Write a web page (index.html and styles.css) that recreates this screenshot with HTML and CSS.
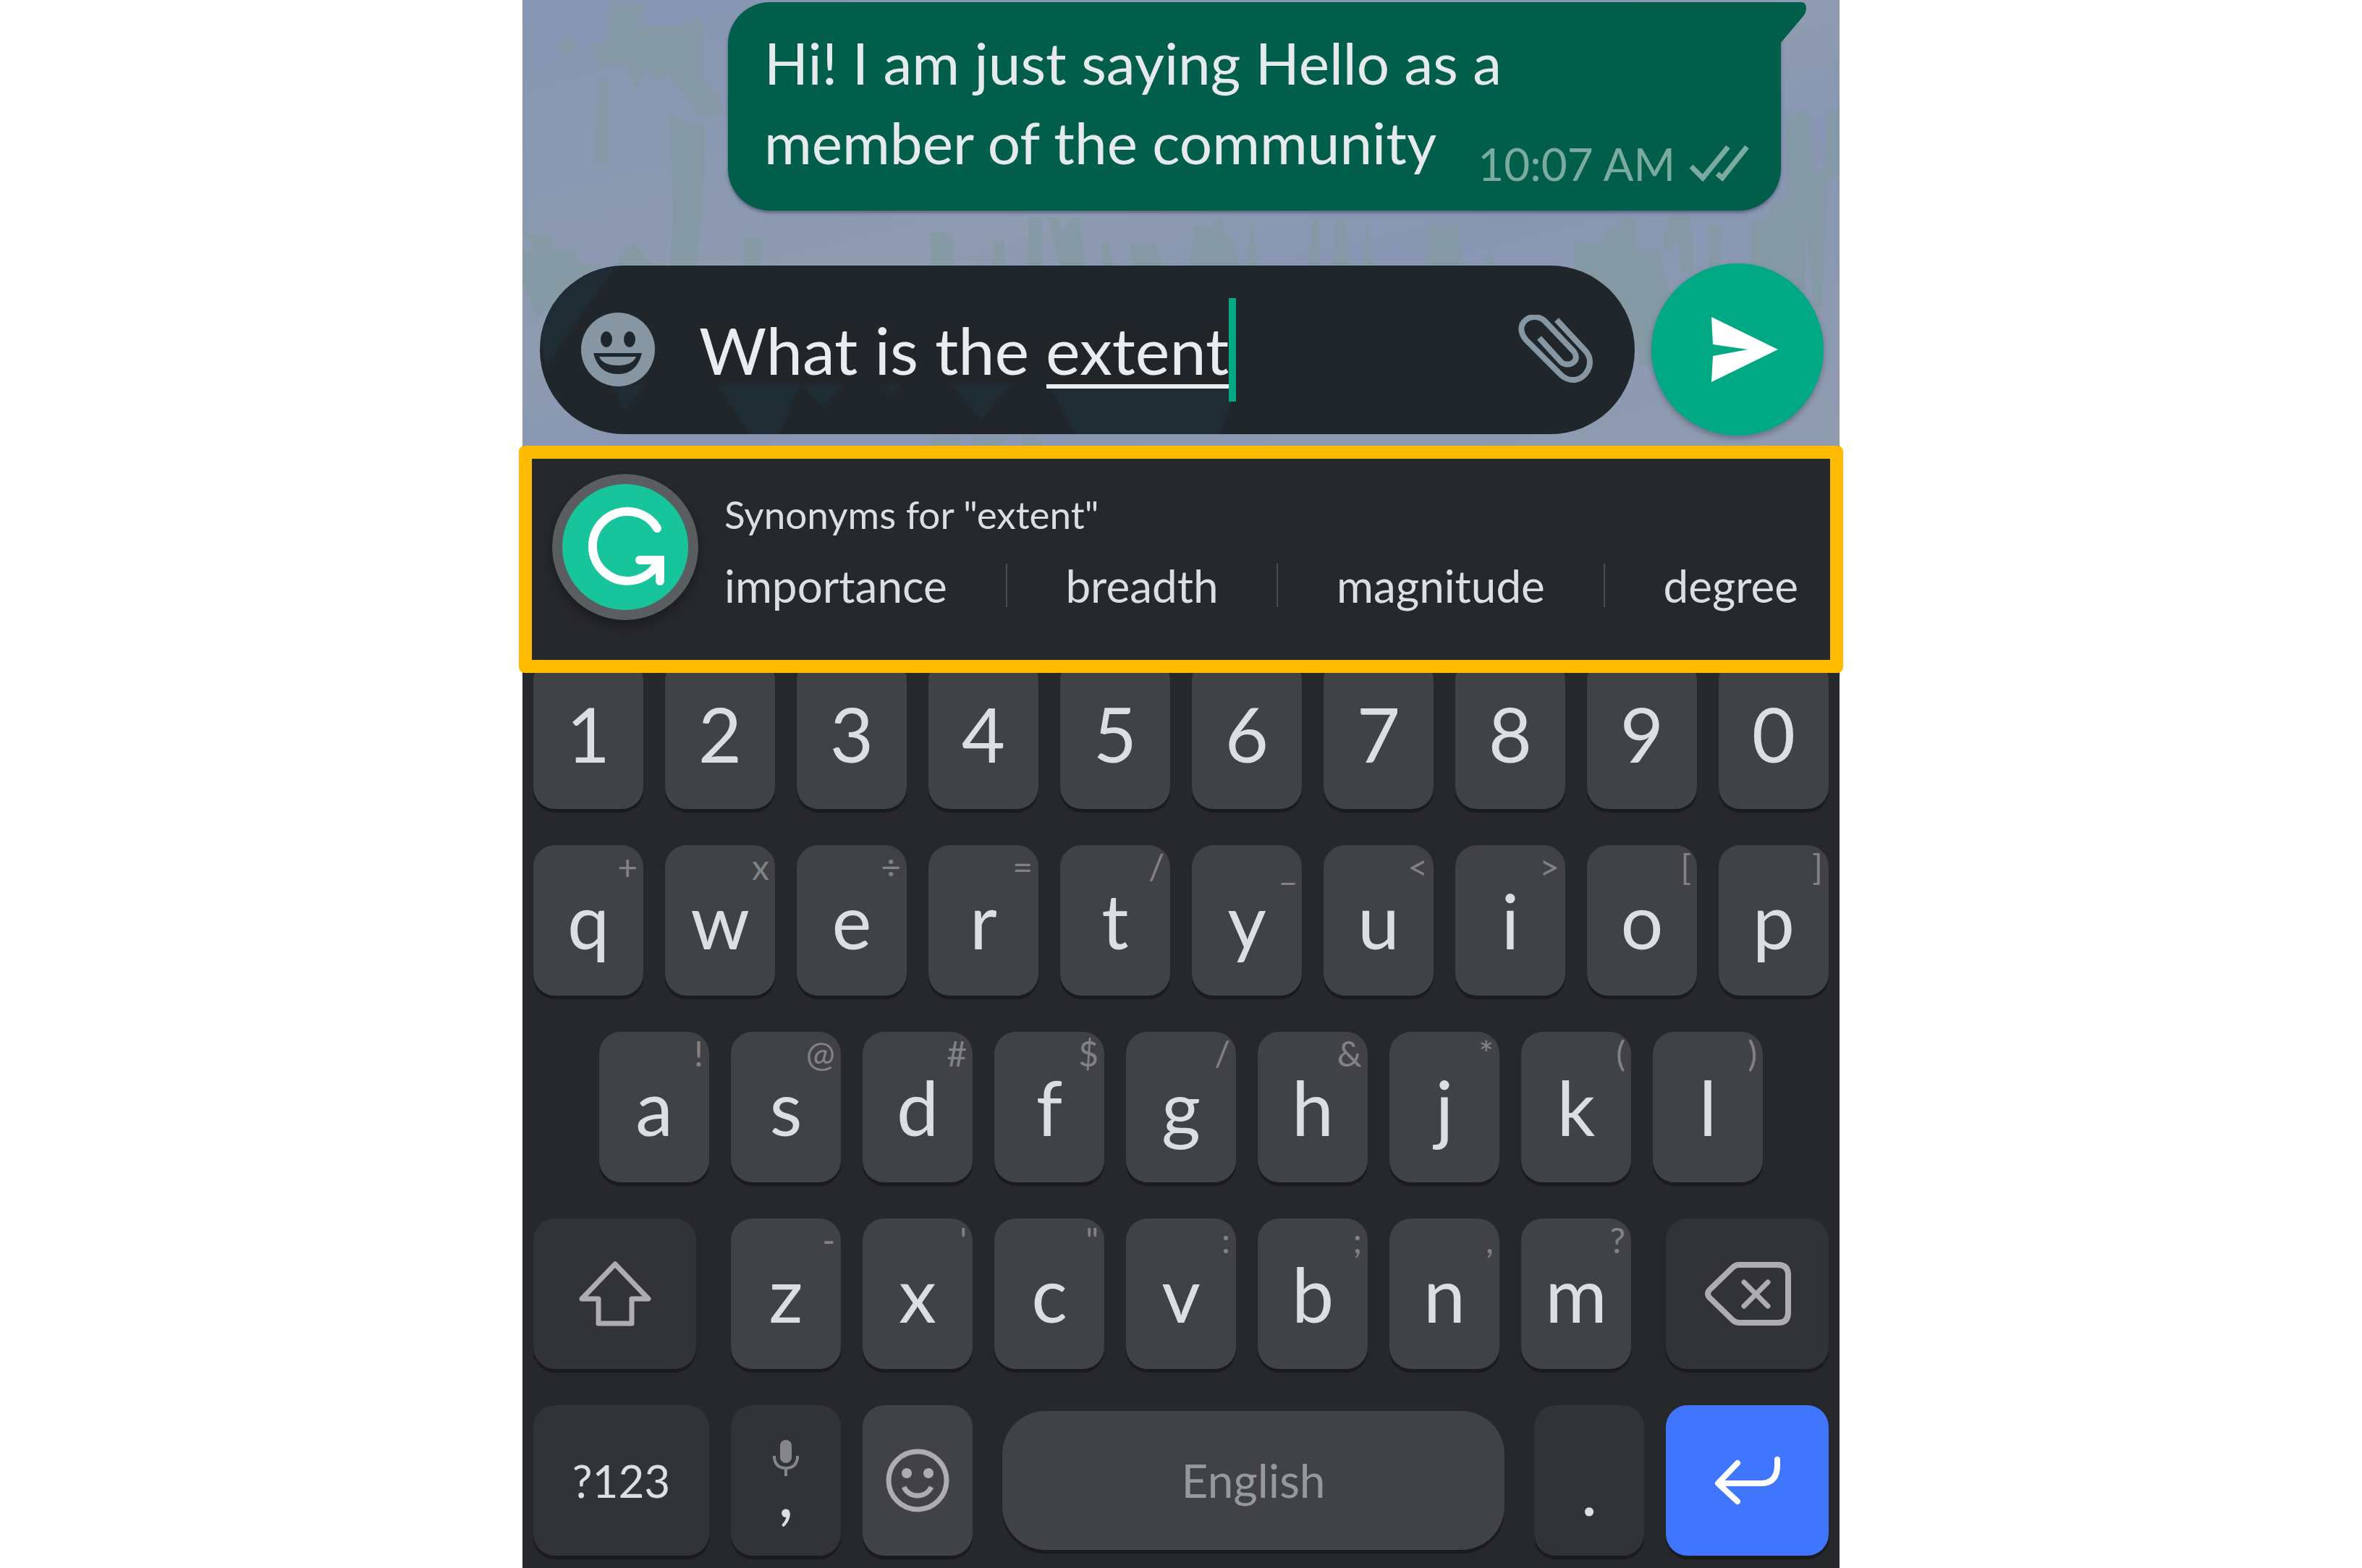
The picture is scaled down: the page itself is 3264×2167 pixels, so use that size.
FILE: index.html
```
<!DOCTYPE html>
<html lang="en">
<head>
    <meta charset="UTF-8">
    <title>Chat keyboard</title>
    <link rel="stylesheet" href="styles.css">
</head>
<body>
    <main class="phone">
        <section class="chat">
            <!-- Wallpaper -->
            <svg class="wallpaper" viewBox="0 0 1820 616" preserveAspectRatio="none" aria-hidden="true">
                <g fill="#849aa3" opacity="0.85">
                    <path d="M121 6H166V36H222L240 25L249 32L251 110L275 140L278 155L262 163L245 160L215 120L200 100L185 112L170 95L157 125L145 95L130 85L108 95L95 60L118 60Z"/>
                    <path d="M103 110H119V225H99Z"/>
                    <path d="M50 52H72V73H50Z"/>
                    <path d="M203 155L225 170H252L250 290L240 370H203L208 300Z"/>
                    <path d="M3 325H38L44 345H70L78 365H108V380L70 400L20 440L0 390V345L20 350Z"/>
                    <path d="M130 370L140 342L155 337L185 370Z"/>
                    <path d="M304 327H333L328 370H308Z"/>
                    <path d="M565 370V322L585 320L596 330V370Z"/>
                    <path d="M648 370L652 333H665L668 370Z"/>
                    <path d="M697 370L700 300H718V370Z"/>
                    <path d="M727 300H740L745 320L760 300H770L778 370H742Z"/>
                    <path d="M800 335H812L816 370H804Z"/>
                    <path d="M840 336H875L886 370H842Z"/>
                    <path d="M920 370L930 310L950 316L964 298L972 325L982 330L990 370Z"/>
                    <path d="M1000 370L1008 303L1018 370Z"/>
                    <path d="M1085 370L1092 304H1100L1103 370Z"/>
                    <path d="M1120 370L1124 304L1135 298L1146 370Z"/>
                    <path d="M1161 370L1168 303L1179 370Z"/>
                    <path d="M1249 370L1254 307L1270 314L1292 307L1300 370Z"/>
                    <path d="M1332 370L1336 336L1342 370Z"/>
                    <path d="M1454 370V335L1490 336L1500 316L1515 314L1522 300H1536L1541 344L1572 345L1576 375L1586 400L1580 430L1570 505H1545L1530 450L1500 400Z"/>
                    <path d="M1577 340L1584 300H1615L1618 380L1600 375L1598 325L1585 350Z"/>
                    <path d="M1638 312L1657 310L1655 370H1640Z"/>
                    <path d="M1697 304H1722L1726 278H1742L1748 250L1746 165L1766 150L1782 165L1784 245L1800 230L1805 150H1817V245L1802 255L1796 425H1784L1773 300V400H1697Z"/>
                    <path d="M567 602H605V616H567Z"/>
                    <path d="M620 603H672L660 616H625Z"/>
                    <path d="M690 603H705L722 616H692Z"/>
                </g>
            </svg>

            <div class="bubble">
                <svg class="tail" viewBox="0 0 36 56" aria-hidden="true"><path d="M0 0H28Q35 0 35 9Q35 13 32 18L0 56Z" fill="#005e4b"/></svg>
                <p class="message">
                    Hi! I am just saying Hello as a<br>
                    member of the community
                    <span class="meta">
                        <time>10:07 AM</time>
                        <svg class="ticks" viewBox="0 0 82 52" aria-hidden="true"><path d="M2 30L18 46L53 3M38 40L45 46L79 3" fill="none" stroke="#7bab9f" stroke-width="7"/></svg>
                    </span>
                </p>
            </div>

            <form class="compose">
                <div class="field">
                    <svg class="field-pattern" viewBox="0 0 1513 233" preserveAspectRatio="none" aria-hidden="true">
                        <path d="M105 0L8 140L0 100V0ZM98 165H147L117 200ZM245 165H360L330 233H290ZM360 165H420L392 195ZM470 165H500L485 180ZM570 165H650L610 215ZM702 165H965L940 233H740Z" fill="#1f2c34"/>
                    </svg>
                    <button type="button" class="icon-btn" aria-label="Emoji">
                        <svg class="icon-smile" viewBox="0 0 104 104">
                            <circle cx="52" cy="52" r="51" fill="#8696a3"/>
                            <ellipse cx="36" cy="38" rx="8" ry="11" fill="#20272c"/>
                            <ellipse cx="68" cy="38" rx="8" ry="11" fill="#20272c"/>
                            <path d="M18 57H85Q78 86 52 86Q25 86 18 57Z" fill="#20272c"/>
                            <path d="M26 62H77Q72 74 52 74Q31 74 26 62Z" fill="#8696a3"/>
                        </svg>
                    </button>
                    <div class="entry">
                        <input class="entry-input" type="text" aria-label="Message" value="What is the extent">
                        <span class="caret"></span>
                    </div>
                    <button type="button" class="icon-btn" aria-label="Attach">
                        <svg class="icon-clip" viewBox="0 0 106 96" fill="none" stroke="#8696a3" stroke-width="8" stroke-linecap="butt">
                            <path d="M54 7L94 50C112 70 86 104 61 84L12 35C-8 12 22 -8 39 10L78 51C88 65 69 74 60 65L30 32"/>
                        </svg>
                    </button>
                </div>
                <button type="submit" class="send" aria-label="Send">
                    <svg class="icon-send" viewBox="0 0 92 90"><path d="M0 0L92 45L0 90L2 54L50 45L2 38Z" fill="#fff"/></svg>
                </button>
            </form>
        </section>

        <section class="suggestions">
            <svg class="logo" viewBox="0 0 202 202" role="img" aria-label="Grammarly">
                <circle cx="101" cy="101" r="101" fill="#5a5e61"/>
                <circle cx="101" cy="101" r="87" fill="#18c49c"/>
                <path d="M145 75A48 48 0 1 0 147 121" fill="none" stroke="#fff" stroke-width="12" stroke-linecap="round"/>
                <path d="M121 119H149V148" fill="none" stroke="#fff" stroke-width="12" stroke-linecap="round"/>
                <path d="M131 113H155V142Z" fill="#fff"/>
            </svg>
            <div class="synonyms">
                <h1 class="synonyms-title">Synonyms for "extent"</h1>
                <div class="synonyms-list">
                    <button type="button" class="word">importance</button>
                    <span class="divider"></span>
                    <button type="button" class="word">breadth</button>
                    <span class="divider"></span>
                    <button type="button" class="word">magnitude</button>
                    <span class="divider"></span>
                    <button type="button" class="word">degree</button>
                </div>
            </div>
        </section>

        <section class="keyboard">
            <div class="keys keys-ten">
                <button type="button" class="key">1</button>
                <button type="button" class="key">2</button>
                <button type="button" class="key">3</button>
                <button type="button" class="key">4</button>
                <button type="button" class="key">5</button>
                <button type="button" class="key">6</button>
                <button type="button" class="key">7</button>
                <button type="button" class="key">8</button>
                <button type="button" class="key">9</button>
                <button type="button" class="key">0</button>
            </div>
            <div class="keys keys-ten">
                <button type="button" class="key">q<span class="hint">+</span></button>
                <button type="button" class="key">w<span class="hint">x</span></button>
                <button type="button" class="key">e<span class="hint">÷</span></button>
                <button type="button" class="key">r<span class="hint">=</span></button>
                <button type="button" class="key">t<span class="hint">/</span></button>
                <button type="button" class="key">y<span class="hint">_</span></button>
                <button type="button" class="key">u<span class="hint">&lt;</span></button>
                <button type="button" class="key">i<span class="hint">&gt;</span></button>
                <button type="button" class="key">o<span class="hint">[</span></button>
                <button type="button" class="key">p<span class="hint">]</span></button>
            </div>
            <div class="keys keys-nine">
                <button type="button" class="key">a<span class="hint">!</span></button>
                <button type="button" class="key">s<span class="hint">@</span></button>
                <button type="button" class="key">d<span class="hint">#</span></button>
                <button type="button" class="key">f<span class="hint">$</span></button>
                <button type="button" class="key">g<span class="hint">/</span></button>
                <button type="button" class="key">h<span class="hint">&amp;</span></button>
                <button type="button" class="key">j<span class="hint">*</span></button>
                <button type="button" class="key">k<span class="hint">(</span></button>
                <button type="button" class="key">l<span class="hint">)</span></button>
            </div>
            <div class="keys keys-shift">
                <button type="button" class="key dark shift" aria-label="Shift">
                    <svg class="icon-shift" viewBox="0 0 104 92"><path d="M52 5L98 53H75V87H29V53H6Z" fill="none" stroke="#adadaf" stroke-width="7" stroke-linejoin="round"/></svg>
                </button>
                <button type="button" class="key">z<span class="hint">-</span></button>
                <button type="button" class="key">x<span class="hint">'</span></button>
                <button type="button" class="key">c<span class="hint">"</span></button>
                <button type="button" class="key">v<span class="hint">:</span></button>
                <button type="button" class="key">b<span class="hint">;</span></button>
                <button type="button" class="key">n<span class="hint">,</span></button>
                <button type="button" class="key">m<span class="hint">?</span></button>
                <button type="button" class="key dark backspace" aria-label="Backspace">
                    <svg class="icon-back" viewBox="0 0 120 88" fill="none" stroke="#adadaf" stroke-width="8" stroke-linecap="round" stroke-linejoin="round">
                        <path d="M48 4H102Q116 4 116 18V70Q116 84 102 84H48Q43 84 39 80L7 49Q3 44 7 39L39 8Q43 4 48 4Z"/>
                        <path d="M55 28L88 61M88 28L55 61" stroke-width="7"/>
                    </svg>
                </button>
            </div>
            <div class="keys keys-bottom">
                <button type="button" class="key dark label">?123</button>
                <button type="button" class="key dark comma" aria-label="Comma, voice input">
                    <svg class="icon-mic" viewBox="0 0 36 50"><rect x="10" y="0" width="16" height="32" rx="8" fill="#858688"/><path d="M2 22V25Q4 39 18 39Q32 39 34 25V22M18 39V50" fill="none" stroke="#858688" stroke-width="4"/></svg>
                    <span>,</span>
                </button>
                <button type="button" class="key" aria-label="Emoji keyboard">
                    <svg class="icon-face" viewBox="0 0 88 88">
                        <circle cx="44" cy="44" r="40" fill="none" stroke="#adadaf" stroke-width="7"/>
                        <circle cx="29" cy="34" r="7" fill="#adadaf"/>
                        <circle cx="59" cy="34" r="7" fill="#adadaf"/>
                        <path d="M25 53Q31 65 44 65Q57 65 63 53" fill="none" stroke="#adadaf" stroke-width="7"/>
                    </svg>
                </button>
                <button type="button" class="key space">English</button>
                <button type="button" class="key dark period">.</button>
                <button type="button" class="key enter" aria-label="Enter">
                    <svg class="icon-enter" viewBox="0 0 92 68" fill="none" stroke="#fff" stroke-width="8" stroke-linecap="round" stroke-linejoin="round">
                        <path d="M87 5V13Q87 38 64 38H6M32 10L5 38L32 63"/>
                    </svg>
                </button>
            </div>
        </section>
    </main>
</body>
</html>
```
FILE: styles.css
```
* {
    box-sizing: border-box;
}
body {
    margin: 0;
    background: #ffffff;
    font-family: Lato, "Liberation Sans", sans-serif;
}
button {
    border: none;
    background: none;
    padding: 0;
    margin: 0;
    color: inherit;
    font-family: inherit;
    cursor: pointer;
}
svg {
    display: block;
}
.phone {
    width: 55.76%;
    min-height: 100vh;
    margin: 0 auto;
    background: #27282c;
    color: #dcdfe1;
}

/* Chat */
.chat {
    position: relative;
    display: flex;
    flex-direction: column;
    gap: 73px;
    padding: 3px 22px 14px 24px;
    background: linear-gradient(165deg, #8695b3 0%, #8e9bb0 45%, #8896b3 60%, #919cb0 100%);
}
.wallpaper, .field-pattern {
    position: absolute;
    top: 0;
    left: 0;
    width: 100%;
    height: 100%;
}
.bubble {
    position: relative;
    margin-left: 260px;
    margin-right: 59px;
    padding: 28px 44px 20px 50px;
    background: #005e4b;
    border-radius: 58px 0 58px 58px;
    box-shadow: 0 3px 4px rgba(40, 50, 80, 0.5);
}
.tail {
    position: absolute;
    top: 0;
    left: 100%;
    width: 36px;
    height: 56px;
}
.message {
    margin: 0;
    color: #e6eaed;
    font-size: 80px;
    line-height: 110px;
}
.meta {
    float: right;
    display: flex;
    align-items: center;
    gap: 20px;
    padding-top: 40px;
    color: #7bab9f;
    font-size: 62px;
    line-height: 90px;
}
.ticks {
    width: 82px;
    height: 52px;
}
.compose {
    position: relative;
    display: flex;
    align-items: center;
    gap: 23px;
}
.field {
    position: relative;
    flex: 1;
    min-width: 0;
    display: flex;
    align-items: center;
    height: 233px;
    padding: 0 56px;
    background: #20262a;
    border-radius: 117px;
    overflow: hidden;
}
.icon-btn {
    position: relative;
}
.icon-smile {
    width: 104px;
    height: 104px;
}
.entry {
    position: relative;
    flex: 1;
    min-width: 0;
    display: flex;
    align-items: center;
    padding-left: 60px;
}
.entry-input {
    field-sizing: content;
    height: 143px;
    padding: 0;
    border: none;
    outline: none;
    color: #e9edef;
    font-family: inherit;
    font-size: 90px;
    /* underline below the word being completed */
    background: linear-gradient(#e9edef, #e9edef) right 0 bottom 18px / 252px 6px no-repeat;
}
.caret {
    width: 10px;
    height: 143px;
    background: #00a884;
}
.icon-clip {
    width: 106px;
    height: 96px;
}
.send {
    display: flex;
    align-items: center;
    justify-content: center;
    width: 238px;
    height: 238px;
    padding-left: 20px;
    background: #00a884;
    border-radius: 50%;
    box-shadow: 0 4px 8px rgba(40, 50, 80, 0.4);
}
.icon-send {
    width: 92px;
    height: 90px;
}

/* Synonym bar */
.suggestions {
    position: relative;
    z-index: 1;
    display: flex;
    align-items: flex-start;
    gap: 36px;
    height: 314px;
    margin: 0 -5px;
    padding: 21px 44px 0 28px;
    border: 18px solid #ffbb00;
    border-radius: 8px;
    background: #27282c;
}
.logo {
    flex: none;
    width: 202px;
    height: 202px;
    border-radius: 50%;
    box-shadow: 0 8px 14px rgba(0, 0, 0, 0.3);
}
.synonyms {
    flex: 1;
    min-width: 0;
    padding-top: 20px;
}
.synonyms-title {
    margin: 0;
    font-size: 53px;
    font-weight: normal;
    line-height: 72px;
}
.synonyms-list {
    display: flex;
    align-items: center;
    justify-content: space-between;
    padding-top: 22px;
}
.word {
    font-size: 62px;
    line-height: 80px;
}
.divider {
    width: 2px;
    height: 60px;
    background: #4b4c50;
}

/* Keyboard */
.keyboard {
    display: flex;
    flex-direction: column;
    gap: 50px;
    margin-top: -20px;
    padding-bottom: 17px;
}
.keys {
    display: grid;
    height: 208px;
}
.keys-ten {
    grid-template-columns: repeat(10, minmax(0, 1fr));
}
.keys-nine {
    grid-template-columns: repeat(9, minmax(0, 1fr));
    padding: 0 5%;
}
.keys-shift {
    grid-template-columns: minmax(0, 3fr) repeat(7, minmax(0, 2fr)) minmax(0, 3fr);
}
.keys-bottom {
    grid-template-columns: 30fr 20fr 20fr 82fr 20fr 28fr;
}
.key {
    position: relative;
    display: flex;
    align-items: center;
    justify-content: center;
    min-width: 0;
    margin: 0 15px;
    background: #414246;
    border-radius: 30px;
    box-shadow: 0 5px 1px #1a1b1d;
    font-size: 104px;
    line-height: 208px;
}
.key.dark {
    background: #323337;
}
.hint {
    position: absolute;
    top: 4px;
    right: 8px;
    color: #818285;
    font-size: 48px;
    line-height: 52px;
}
.key.shift {
    margin-right: 33px;
}
.key.backspace {
    margin-left: 33px;
}
.key.label {
    font-size: 62px;
}
.key.comma {
    flex-direction: column;
    justify-content: flex-start;
    padding-top: 48px;
    font-size: 96px;
    line-height: 40px;
}
.key.period {
    align-items: flex-end;
    font-size: 96px;
    line-height: 184px;
}
.key.space {
    margin: 8px 26px;
    border-radius: 60px;
    color: #97989a;
    font-size: 64px;
    line-height: 190px;
}
.key.enter {
    background: #4076fe;
}
.icon-shift {
    width: 104px;
    height: 92px;
}
.icon-back {
    width: 120px;
    height: 88px;
}
.icon-mic {
    width: 36px;
    height: 50px;
}
.icon-face {
    width: 88px;
    height: 88px;
}
.icon-enter {
    width: 92px;
    height: 68px;
}
```
